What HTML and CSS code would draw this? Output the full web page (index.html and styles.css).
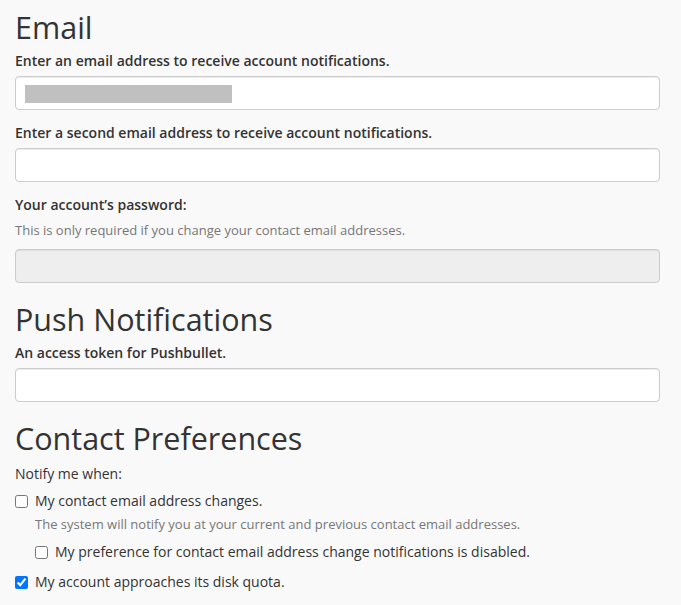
FILE: index.html
```html
<!DOCTYPE html>
<html lang="en">
<head>
<meta charset="utf-8">
<title>Contact Information</title>
<link rel="stylesheet" href="styles.css">
</head>
<body>
<main class="page">
  <section class="section">
    <h2 class="title">Email</h2>
    <div class="group">
      <label class="label" for="email1">Enter an email address to receive account notifications.</label>
      <div class="field-wrap">
        <input class="field" id="email1" type="text">
        <span class="redact"></span>
      </div>
    </div>
    <div class="group">
      <label class="label" for="email2">Enter a second email address to receive account notifications.</label>
      <input class="field" id="email2" type="text">
    </div>
    <div class="group">
      <label class="label" for="pw">Your account’s password:</label>
      <p class="help help-pw">This is only required if you change your contact email addresses.</p>
      <input class="field" id="pw" type="password" disabled>
    </div>
  </section>

  <section class="section">
    <h2 class="title">Push Notifications</h2>
    <div class="group">
      <label class="label" for="token">An access token for Pushbullet.</label>
      <input class="field" id="token" type="text">
    </div>
  </section>

  <section class="section">
    <h2 class="title">Contact Preferences</h2>
    <p class="notify">Notify me when:</p>
    <label class="check row-1"><input type="checkbox" class="box"><span>My contact email address changes.</span></label>
    <p class="help help-check">The system will notify you at your current and previous contact email addresses.</p>
    <label class="check nested"><input type="checkbox" class="box"><span>My preference for contact email address change notifications is disabled.</span></label>
    <label class="check last"><input type="checkbox" class="box" checked><span>My account approaches its disk quota.</span></label>
  </section>
</main>
</body>
</html>
```

FILE: styles.css
```css
html, body {
  margin: 0;
  padding: 0;
  background: #f9f9f9;
}

body {
  font-family: "Open Sans", "Liberation Sans", sans-serif;
  font-size: 14px;
  line-height: 20px;
  color: #333;
}

.page {
  display: flex;
  flex-direction: column;
  padding: 4px 21px 0 15px;
}

.section {
  display: flex;
  flex-direction: column;
}

.title {
  font-size: 30.5px;
  font-weight: 400;
  line-height: 36px;
  margin: 5px 0 6px;
  color: #333;
}

.group {
  margin-bottom: 13px;
}

.label {
  display: block;
  font-weight: 600;
  margin-bottom: 5px;
}

.help {
  margin: 0;
  font-size: 13px;
  color: #777;
}

.help-pw {
  margin: 2px 0 9px;
}

.field-wrap {
  position: relative;
}

.field {
  display: block;
  box-sizing: border-box;
  width: 100%;
  height: 34px;
  margin: 0;
  padding: 6px 12px;
  font: inherit;
  color: #555;
  background: #fff;
  border: 1px solid #ccc;
  border-radius: 4px;
  box-shadow: inset 0 1px 1px rgba(0,0,0,.075);
}

.field:disabled {
  background: #eee;
}

.redact {
  position: absolute;
  left: 10px;
  top: 9px;
  width: 207px;
  height: 18px;
  background: #c0c0c0;
}

.notify {
  margin: 2px 0 0;
}

.check {
  display: flex;
  align-items: center;
  gap: 7px;
}

.box {
  width: 13px;
  height: 13px;
  margin: 0;
  flex: none;
}

.row-1 {
  margin-top: 7px;
}

.help-check {
  margin: 3px 0 0 20px;
}

.nested {
  margin: 8px 0 0 20px;
}

.last {
  margin-top: 10px;
}
```
